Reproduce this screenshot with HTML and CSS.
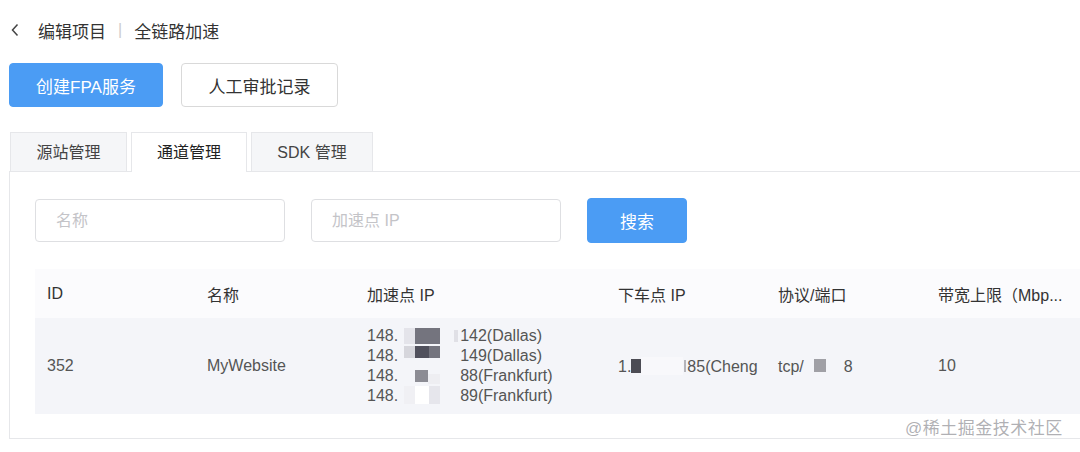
FILE: index.html
```html
<!DOCTYPE html>
<html lang="zh-CN">
<head>
    <meta charset="UTF-8">
    <title>全链路加速</title>
    <link rel="stylesheet" href="styles.css">
</head>
<body>
    <!-- Breadcrumb -->
    <div class="top-bar">
        <svg class="back-icon" width="10" height="16" viewBox="0 0 10 16">
            <path d="M7.5 2.5 L2.5 8 L7.5 13.5" fill="none" stroke="#444" stroke-width="1.5"/>
        </svg>
        <span class="crumb">编辑项目</span>
        <span class="crumb-sep">|</span>
        <span class="crumb">全链路加速</span>
    </div>

    <div class="actions">
        <button class="btn btn-primary btn-large">创建FPA服务</button>
        <button class="btn btn-default btn-large">人工审批记录</button>
    </div>

    <!-- Tabs -->
    <div class="tabs">
        <div class="tab tab-first">源站管理</div>
        <div class="tab tab-active">通道管理</div>
        <div class="tab tab-sdk">SDK 管理</div>
    </div>

    <div class="panel">
        <div class="search-row">
            <input class="search-input" type="text" placeholder="名称">
            <input class="search-input" type="text" placeholder="加速点 IP">
            <button class="btn btn-primary btn-search">搜索</button>
        </div>

        <table class="data-table">
            <thead>
                <tr>
                    <th class="col-id">ID</th>
                    <th class="col-name">名称</th>
                    <th class="col-ip">加速点 IP</th>
                    <th class="col-ip2">下车点 IP</th>
                    <th class="col-port">协议/端口</th>
                    <th class="col-bw">带宽上限（Mbp...</th>
                </tr>
            </thead>
            <tbody>
                <tr>
                    <td>352</td>
                    <td>MyWebsite</td>
                    <td>
                        <div class="ip-line">148.<span class="mask mask-a"></span>142(Dallas)</div>
                        <div class="ip-line">148.<span class="mask mask-b"></span>149(Dallas)</div>
                        <div class="ip-line">148.<span class="mask mask-c"></span>88(Frankfurt)</div>
                        <div class="ip-line">148.<span class="mask mask-d"></span>89(Frankfurt)</div>
                    </td>
                    <td class="nowrap">1.<span class="mask mask-e"></span>85(Cheng</td>
                    <td class="nowrap">tcp/<span class="mask mask-f"></span>8</td>
                    <td>10</td>
                </tr>
            </tbody>
        </table>
    </div>

    <div class="watermark">@稀土掘金技术社区</div>
</body>
</html>
```

FILE: styles.css
```css
html, body {
    margin: 0;
    padding: 0;
    overflow: hidden;
}

body {
    font-family: "Liberation Sans", "Noto Sans CJK SC", sans-serif;
    background: #fff;
    color: #333;
    width: 1080px;
    height: 452px;
    position: relative;
}

/* Breadcrumb */
.top-bar {
    height: 60px;
    display: flex;
    align-items: center;
    padding-left: 10px;
    font-size: 17px;
    color: #333;
}

.back-icon {
    margin-right: 18px;
}

.crumb-sep {
    color: #ccc;
    margin: 0 12px;
    font-size: 16px;
}

/* Buttons */
.actions {
    display: flex;
    gap: 18px;
    padding: 3px 0 0 9px;
}

.btn {
    font-family: inherit;
    border-radius: 4px;
    cursor: pointer;
    padding: 0;
}

.btn-large {
    height: 44px;
    font-size: 17px;
}

.btn-primary {
    background: #4b9cf4;
    border: 1px solid #4b9cf4;
    color: #fff;
    width: 154px;
}

.btn-default {
    background: #fff;
    border: 1px solid #d9d9d9;
    color: #333;
    width: 157px;
}

/* Tabs */
.tabs {
    display: flex;
    gap: 4px;
    margin: 25px 0 0 10px;
    position: relative;
    z-index: 1;
}

.tab {
    height: 38px;
    line-height: 40px;
    text-align: center;
    font-size: 16px;
    color: #444;
    background: #f5f6f8;
    border: 1px solid #e6e7ea;
    border-bottom: none;
}

.tab-first {
    width: 115px;
}

.tab-active {
    width: 114px;
    background: #fff;
    color: #222;
    height: 39px;
    margin-bottom: -1px;
}

.tab-sdk {
    width: 120px;
}

/* Panel */
.panel {
    margin-left: 9px;
    width: 1100px;
    border: 1px solid #e6e7ea;
    padding: 26px 0 24px 25px;
}

.search-row {
    display: flex;
    align-items: center;
    gap: 26px;
}

.search-input {
    box-sizing: border-box;
    width: 250px;
    height: 43px;
    border: 1px solid #dedfe2;
    border-radius: 4px;
    padding: 0 20px;
    font-family: inherit;
    font-size: 16px;
    color: #333;
}

.search-input::placeholder {
    color: #c4c4c8;
}

.btn-search {
    width: 100px;
    height: 45px;
    font-size: 17px;
}

/* Table */
.data-table {
    margin-top: 26px;
    border-collapse: collapse;
    table-layout: fixed;
    width: 1091px;
    font-size: 16px;
}

.data-table th {
    height: 49px;
    padding: 0 12px;
    text-align: left;
    font-weight: normal;
    color: #333;
    background: #fbfbfd;
    white-space: nowrap;
    overflow: hidden;
}

.data-table td {
    height: 96px;
    padding: 0 12px;
    background: #f4f5f9;
    color: #555;
    vertical-align: middle;
}

.col-id, .col-name, .col-ip2, .col-port {
    width: 136px;
}

.col-ip {
    width: 227px;
}

.col-bw {
    width: 176px;
}

.nowrap {
    white-space: nowrap;
}

.ip-line {
    line-height: 20px;
    white-space: nowrap;
}

/* Blurred parts of the addresses */
.mask {
    display: inline-block;
    height: 18px;
    vertical-align: -3px;
}

.mask-a {
    width: 62px;
    background:
        linear-gradient(#e4e4ea, #e4e4ea) 6px 2px / 11px 16px no-repeat,
        linear-gradient(#74747e, #74747e) 17px 2px / 25px 18px no-repeat,
        linear-gradient(#e0e0e6, #e0e0e6) 56px 4px / 4px 12px no-repeat;
}

.mask-b {
    width: 62px;
    background:
        linear-gradient(#d6d6dc, #d6d6dc) 6px 0 / 11px 12px no-repeat,
        linear-gradient(#50505c, #50505c) 17px 0 / 14px 12px no-repeat,
        linear-gradient(#74747e, #74747e) 31px 0 / 11px 12px no-repeat;
}

.mask-c {
    width: 62px;
    background:
        linear-gradient(#8c8c94, #8c8c94) 17px 4px / 13px 12px no-repeat,
        linear-gradient(#eeeef2, #eeeef2) 30px 8px / 12px 10px no-repeat;
}

.mask-d {
    width: 62px;
    background:
        linear-gradient(#f0f0f4, #f0f0f4) 6px 0 / 11px 18px no-repeat,
        linear-gradient(#fff, #fff) 17px 0 / 14px 18px no-repeat,
        linear-gradient(#e6e6ec, #e6e6ec) 31px 0 / 11px 18px no-repeat;
}

.mask-e {
    width: 56px;
    background:
        linear-gradient(#4c4c54, #4c4c54) 0 2px / 10px 14px no-repeat,
        linear-gradient(#f8f8fb, #f8f8fb) 10px 0 / 42px 18px no-repeat,
        linear-gradient(#b4b4ba, #b4b4ba) 53px 3px / 2px 12px no-repeat;
}

.mask-f {
    width: 40px;
    background:
        linear-gradient(#a0a0a6, #a0a0a6) 10px 2px / 12px 13px no-repeat;
}

.watermark {
    position: absolute;
    left: 905px;
    top: 414px;
    font-size: 17px;
    color: rgba(150, 150, 155, 0.75);
    letter-spacing: 0.5px;
}
```
